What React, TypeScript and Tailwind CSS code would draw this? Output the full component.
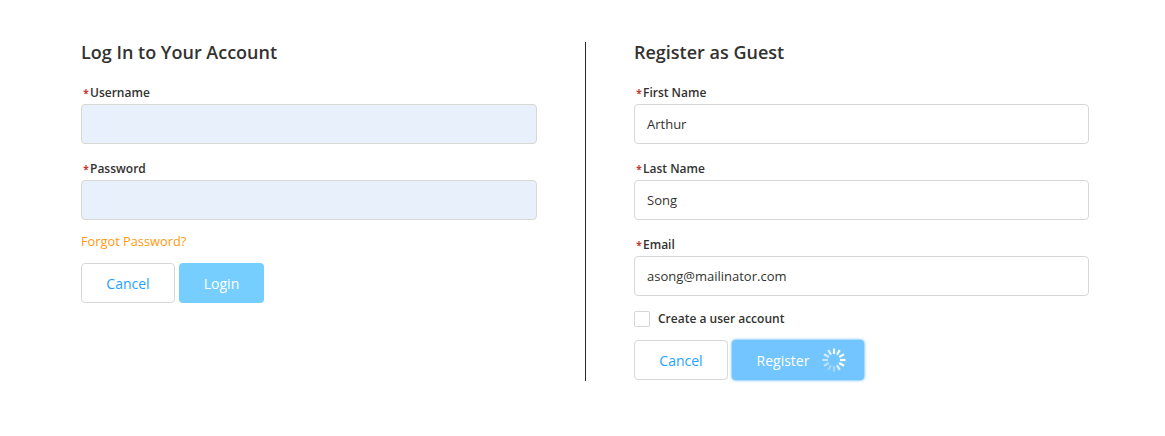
import { ReactNode } from 'react'

const font = { fontFamily: '"Open Sans", sans-serif' }

function Field({ label, value, filled }: { label: string; value?: string; filled?: boolean }) {
  return (
    <div className="flex flex-col">
      <label className="flex h-[20px] items-center pl-[2px] pt-[2px] text-[12px] font-semibold leading-none text-[#333230]">
        <span className="mr-[1px] w-[6px] text-center text-[10px] font-bold text-[#c23934]">*</span>
        {label}
      </label>
      <div
        className={`mt-[2px] flex h-[40px] items-center rounded-[4px] border border-[#d9d7d5] px-[12px] pt-[2px] text-[13px] text-[#333230] ${
          filled ? 'bg-[#e8f0fb]' : 'bg-white'
        }`}
      >
        {value}
      </div>
    </div>
  )
}

function Cancel() {
  return (
    <button className="flex h-[40px] w-[94px] items-center justify-center rounded-[4px] border border-[#d9d7d5] bg-white text-[14px] text-[#1fa2ff]">
      Cancel
    </button>
  )
}

function Spinner() {
  const bars = [0, 30, 60, 90, 120, 150, 180, 210, 240, 270, 300, 330]
  const opacity = [0.95, 0.95, 0.9, 1, 1, 0.8, 0.35, 0.35, 0.5, 0.6, 0.7, 0.8]
  return (
    <svg width="26" height="26" viewBox="0 0 26 26" className="ml-[12px]">
      {bars.map((a, i) => (
        <line
          key={a}
          x1="13"
          y1="1.5"
          x2="13"
          y2="7"
          stroke="#fff"
          strokeWidth="2.2"
          opacity={opacity[i]}
          transform={`rotate(${a} 13 13)`}
        />
      ))}
    </svg>
  )
}

function Column({ title, width, children }: { title: string; width: string; children: ReactNode }) {
  return (
    <div className={width}>
      <h2 className="h-[22px] text-[18px] font-semibold leading-[20px] text-[#333230]">{title}</h2>
      {children}
    </div>
  )
}

export default function App() {
  return (
    <div className="flex h-[436px] w-[1165px] bg-white pl-[81px] pt-[42px]" style={font}>
      <Column title="Log In to Your Account" width="w-[456px]">
        <div className="mt-[18px] flex flex-col gap-[14px]">
          <Field label="Username" filled />
          <Field label="Password" filled />
        </div>
        <a className="mt-[11px] block h-[20px] text-[12.8px] leading-[20px] text-[#ff9a0e]">Forgot Password?</a>
        <div className="mt-[12px] flex gap-[4px]">
          <Cancel />
          <button className="flex h-[40px] w-[85px] items-center justify-center rounded-[4px] bg-[#76ceff] text-[14px] text-white">
            Login
          </button>
        </div>
      </Column>

      <div className="ml-[48px] h-[339px] w-px bg-[#2b2826]" />

      <div className="ml-[48px]">
        <Column title="Register as Guest" width="w-[455px]">
          <div className="mt-[18px] flex flex-col gap-[14px]">
            <Field label="First Name" value="Arthur" />
            <Field label="Last Name" value="Song" />
            <Field label="Email" value="asong@mailinator.com" />
          </div>
          <div className="mt-[15px] flex items-center">
            <span className="h-[16px] w-[16px] rounded-[2px] border border-[#d9d7d5] bg-white" />
            <span className="ml-[8px] text-[12px] font-semibold leading-[16px] text-[#333230]">Create a user account</span>
          </div>
          <div className="mt-[13px] flex items-center gap-[4px]">
            <Cancel />
            <button className="flex h-[40px] w-[132px] items-center justify-center rounded-[4px] bg-[#72c5ff] pl-[8px] text-[14px] text-white shadow-[0_0_3px_#1b96ff]">
              Register
              <Spinner />
            </button>
          </div>
        </Column>
      </div>
    </div>
  )
}
